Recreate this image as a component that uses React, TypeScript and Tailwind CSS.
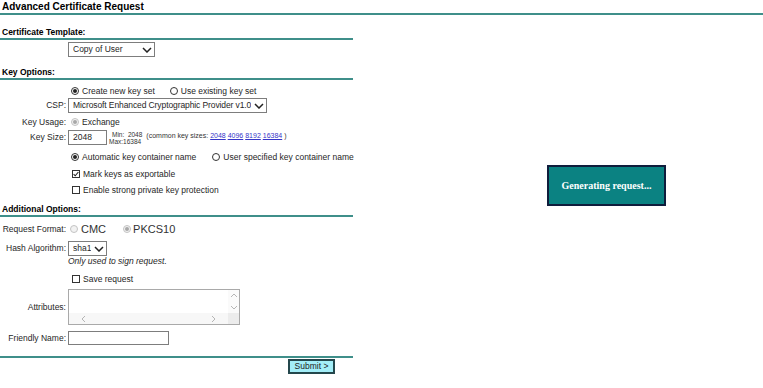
import React from 'react';

const LINE = 'border-[#3f8f8a]';

function Chevron({ className = '' }: { className?: string }) {
  return (
    <svg width="10" height="6" viewBox="0 0 10 6" className={`shrink-0 ${className}`}>
      <path d="M1 1l4 4 4-4" fill="none" stroke="#222" strokeWidth="1.5" />
    </svg>
  );
}

function Radio({ checked = false, disabled = false }: { checked?: boolean; disabled?: boolean }) {
  return (
    <span
      className={`flex h-[8px] w-[8px] shrink-0 items-center justify-center rounded-full border ${
        disabled ? 'border-[#c4c4c4] bg-[#f2f2f2]' : 'border-[#333] bg-white'
      }`}
    >
      {checked && (
        <span className={`h-[4px] w-[4px] rounded-full ${disabled ? 'bg-[#a8a8a8]' : 'bg-[#222]'}`} />
      )}
    </span>
  );
}

function Checkbox({ checked = false }: { checked?: boolean }) {
  return (
    <span className="flex h-[8px] w-[8px] shrink-0 items-center justify-center border border-[#333] bg-white">
      {checked && (
        <svg width="6" height="6" viewBox="0 0 6 6">
          <path d="M0.6 3.2l1.6 1.6L5.4 1" fill="none" stroke="#222" strokeWidth="1.1" />
        </svg>
      )}
    </span>
  );
}

function SectionHeader({ title, className = '' }: { title: string; className?: string }) {
  return (
    <div className={`h-[13px] border-b-2 ${LINE} pl-[2px] text-[8.5px] font-bold leading-[11px] text-black ${className}`}>
      {title}
    </div>
  );
}

function Row({ label, className = '', children }: { label?: string; className?: string; children: React.ReactNode }) {
  return (
    <div className={`flex items-center ${className}`}>
      <div className="w-[66px] shrink-0 text-right">{label}</div>
      <div className="ml-[2px] flex shrink-0 items-center">{children}</div>
    </div>
  );
}

function FakeSelect({ value, width, textClass = '' }: { value: string; width: string; textClass?: string }) {
  return (
    <div className={`flex h-[15px] items-center justify-between gap-[2px] border border-[#7d7d7d] bg-white pl-[4px] pr-[2px] ${width}`}>
      <span className={`overflow-hidden whitespace-nowrap ${textClass}`}>{value}</span>
      <Chevron />
    </div>
  );
}

export default function App() {
  return (
    <div className="relative h-[388px] w-[763px] overflow-hidden whitespace-nowrap bg-white font-['Liberation_Sans',Arial,sans-serif] text-[8.5px] leading-[11px] text-[#262626]">
      {/* Page title */}
      <h1 className={`h-[15px] border-b-2 ${LINE} pl-[2px] text-[10px] font-bold leading-[13px] text-black`}>
        Advanced Certificate Request
      </h1>

      <div className="w-[353px]">
        {/* Certificate Template */}
        <SectionHeader title="Certificate Template:" className="mt-[12px]" />
        <Row className="mt-[2px] h-[15px]">
          <FakeSelect value="Copy of User" width="w-[87px]" />
        </Row>

        {/* Key Options */}
        <SectionHeader title="Key Options:" className="mt-[10px]" />
        <Row className="mt-[4px] h-[14px]">
          <label className="ml-[3px] flex items-center gap-[3px]">
            <Radio checked />
            <span>Create new key set</span>
          </label>
          <label className="ml-[15px] flex items-center gap-[3px]">
            <Radio />
            <span>Use existing key set</span>
          </label>
        </Row>
        <Row label="CSP:" className="h-[15px]">
          <FakeSelect
            value="Microsoft Enhanced Cryptographic Provider v1.0"
            width="w-[199px]"
            textClass="tracking-[-0.1px]"
          />
        </Row>
        <Row label="Key Usage:" className="mt-[2px] h-[14px]">
          <label className="ml-[3px] flex items-center gap-[3px]">
            <Radio checked disabled />
            <span>Exchange</span>
          </label>
        </Row>
        <Row label="Key Size:" className="mt-[1px] h-[15px]">
          <div className="flex h-[15px] w-[39px] items-center border border-[#7d7d7d] bg-white pl-[4px]">2048</div>
          <div className="ml-[2px] flex flex-col text-[6.5px] leading-[7px] text-[#333]">
            <span className="whitespace-pre pl-[3px]">Min:  2048</span>
            <span>Max:16384</span>
          </div>
          <span className="mb-[3px] ml-[4px] whitespace-pre text-[7px] leading-[8px] text-[#333]">
            (common key sizes: <a className="text-[#3535c8] underline">2048</a>{' '}
            <a className="text-[#3535c8] underline">4096</a> <a className="text-[#3535c8] underline">8192</a>{' '}
            <a className="text-[#3535c8] underline">16384</a> )
          </span>
        </Row>
        <Row className="mt-[5px] h-[14px]">
          <label className="ml-[3px] flex items-center gap-[3px]">
            <Radio checked />
            <span>Automatic key container name</span>
          </label>
          <label className="ml-[16px] flex items-center gap-[3px]">
            <Radio />
            <span>User specified key container name</span>
          </label>
        </Row>
        <Row className="mt-[3px] h-[14px]">
          <label className="ml-[4px] flex items-center gap-[3px]">
            <Checkbox checked />
            <span>Mark keys as exportable</span>
          </label>
        </Row>
        <Row className="mt-[2px] h-[14px]">
          <label className="ml-[4px] flex items-center gap-[3px]">
            <Checkbox />
            <span>Enable strong private key protection</span>
          </label>
        </Row>

        {/* Additional Options */}
        <SectionHeader title="Additional Options:" className="mt-[7px]" />
        <Row label="Request Format:" className="mt-[5px] h-[14px]">
          <label className="ml-[2px] flex items-center gap-[3px] text-[11px] text-[#333]">
            <Radio disabled />
            <span>CMC</span>
          </label>
          <label className="ml-[17px] flex items-center gap-[2px] text-[11px] text-[#333]">
            <Radio checked disabled />
            <span>PKCS10</span>
          </label>
        </Row>
        <Row label="Hash Algorithm:" className="mt-[5px] h-[15px]">
          <FakeSelect value="sha1" width="w-[39px]" />
        </Row>
        <Row className="h-[11px]">
          <span className="italic">Only used to sign request.</span>
        </Row>
        <Row className="mt-[5px] h-[14px]">
          <label className="ml-[4px] flex items-center gap-[3px]">
            <Checkbox />
            <span>Save request</span>
          </label>
        </Row>
        <Row label="Attributes:" className="mt-[3px] h-[36px]">
          <div className="flex h-[36px] w-[172px] flex-col border border-[#a9a9a9] bg-white">
            <div className="flex flex-1">
              <div className="flex-1" />
              <div className="flex w-[11px] flex-col items-center justify-between bg-[#fafafa] py-[3px]">
                <svg width="8" height="5" viewBox="0 0 8 5">
                  <path d="M1 4l3-3 3 3" fill="none" stroke="#b5b5b5" strokeWidth="1" />
                </svg>
                <svg width="8" height="5" viewBox="0 0 8 5">
                  <path d="M1 1l3 3 3-3" fill="none" stroke="#b5b5b5" strokeWidth="1" />
                </svg>
              </div>
            </div>
            <div className="flex h-[11px]">
              <div className="flex flex-1 items-center justify-between bg-[#f7f7f7] px-[12px]">
                <svg width="5" height="8" viewBox="0 0 5 8">
                  <path d="M4 1L1 4l3 3" fill="none" stroke="#b5b5b5" strokeWidth="1" />
                </svg>
                <svg width="5" height="8" viewBox="0 0 5 8">
                  <path d="M1 1l3 3-3 3" fill="none" stroke="#b5b5b5" strokeWidth="1" />
                </svg>
              </div>
              <div className="w-[11px] bg-[#ececec]" />
            </div>
          </div>
        </Row>
        <Row label="Friendly Name:" className="mt-[6px] h-[14px]">
          <div className="h-[14px] w-[101px] border border-[#7d7d7d] bg-white" />
        </Row>

        <div className={`mt-[11px] border-t-2 ${LINE}`} />
        <div className="mt-[1px] flex justify-end pr-[18px]">
          <button className="h-[15px] w-[47px] border-2 border-[#24474c] bg-[#a3eef8] text-[8.5px] leading-[11px] text-[#222]">
            Submit &gt;
          </button>
        </div>
      </div>

      {/* Progress popup */}
      <div className="absolute left-[547px] top-[165px] flex h-[41px] w-[119px] items-center justify-center border-2 border-[#0f1d3c] bg-[#0b8282] font-['Liberation_Serif',serif] text-[10px] font-bold text-white">
        Generating request...
      </div>
    </div>
  );
}
